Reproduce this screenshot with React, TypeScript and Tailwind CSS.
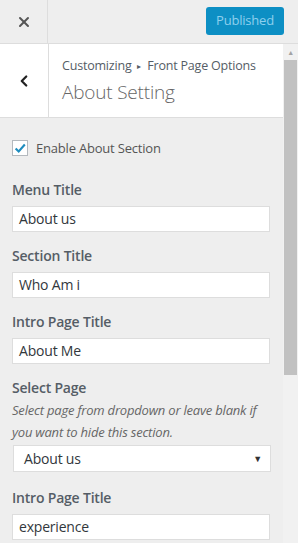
import { ChevronLeft, X } from 'lucide-react'

const font = { fontFamily: '"Open Sans", "Noto Sans", sans-serif' }

const TextField = ({ label, value, className = '' }: { label: string; value: string; className?: string }) => (
  <div className={className}>
    <div className="text-[14px] leading-5 font-semibold text-[#555d66]">{label}</div>
    <div className="mt-[6px] h-[26px] w-[258px] border border-[#ddd] bg-white px-[6px] text-[14px] leading-[24px] text-[#32373c]">
      {value}
    </div>
  </div>
)

const App = () => {
  return (
    <div className="w-[298px] h-[543px] overflow-hidden bg-[#eee] tracking-[-0.2px]" style={font}>
      {/* Top bar */}
      <div className="flex h-[44px] border-b border-[#ddd] bg-[#eee]">
        <div className="flex w-[48px] items-center justify-center border-r border-[#ddd] text-[#555]">
          <X className="w-[16px] h-[16px]" strokeWidth={3} />
        </div>
        <div className="flex flex-1 items-start justify-end pt-[7px] pr-[14px]">
          <div className="flex h-[28px] w-[78px] items-center justify-center rounded-[3px] bg-[#0d8fc4] text-[13px] text-[#8dd0ee]">
            Published
          </div>
        </div>
      </div>

      <div className="flex h-[499px]">
        <div className="w-[283px]">
          {/* Section header */}
          <div className="flex h-[74px] border-b border-[#ddd] bg-white">
            <div className="flex w-[49px] items-center justify-center border-r border-[#ddd] text-[#222]">
              <ChevronLeft className="w-[18px] h-[18px]" strokeWidth={3} />
            </div>
            <div className="pl-[13px] pt-[12px]">
              <div className="flex items-center text-[12.5px] leading-5 text-[#555d66]">
                Customizing
                <span className="mx-[6px] text-[8px] leading-5">▸</span>
                Front Page Options
              </div>
              <div className="mt-[3px] text-[19px] leading-[26px] font-light text-[#666]">About Setting</div>
            </div>
          </div>

          {/* Controls */}
          <div className="pl-[12px] pt-[20px]">
            <div className="flex items-center gap-[8px]">
              <div className="flex h-[16px] w-[16px] items-center justify-center border border-[#b4b9be] bg-white">
                <svg viewBox="0 0 16 16" className="w-[14px] h-[14px]">
                  <path d="M3 8.5 L6.5 12 L13.5 4" fill="none" stroke="#1e8cbe" strokeWidth="2.4" />
                </svg>
              </div>
              <span className="text-[13px] leading-5 text-[#555]">Enable About Section</span>
            </div>

            <TextField className="mt-[22px]" label="Menu Title" value="About us" />
            <TextField className="mt-[14px]" label="Section Title" value="Who Am i" />
            <TextField className="mt-[14px]" label="Intro Page Title" value="About Me" />

            <div className="mt-[14px]">
              <div className="text-[14px] leading-5 font-semibold text-[#555d66]">Select Page</div>
              <div className="mt-[1px] text-[13px] leading-[22px] italic text-[#666] pr-[10px]">
                Select page from dropdown or leave blank if you want to hide this section.
              </div>
              <div className="ml-[1px] mt-[2px] flex h-[27px] w-[258px] items-center justify-between border border-[#ddd] bg-white pl-[10px] pr-[8px] text-[14px] text-[#32373c]">
                <span>About us</span>
                <span className="text-[9px] text-[#333]">▼</span>
              </div>
            </div>

            <TextField className="mt-[16px]" label="Intro Page Title" value="experience" />
          </div>
        </div>

        {/* Scrollbar */}
        <div className="flex w-[15px] flex-col items-center bg-[#f1f1f1]">
          <div className="mt-[5px] text-[7px] leading-[8px] text-[#a3a3a3]">▲</div>
          <div className="mt-[3px] h-[315px] w-[13px] bg-[#c1c1c1]" />
        </div>
      </div>
    </div>
  )
}

export default App
